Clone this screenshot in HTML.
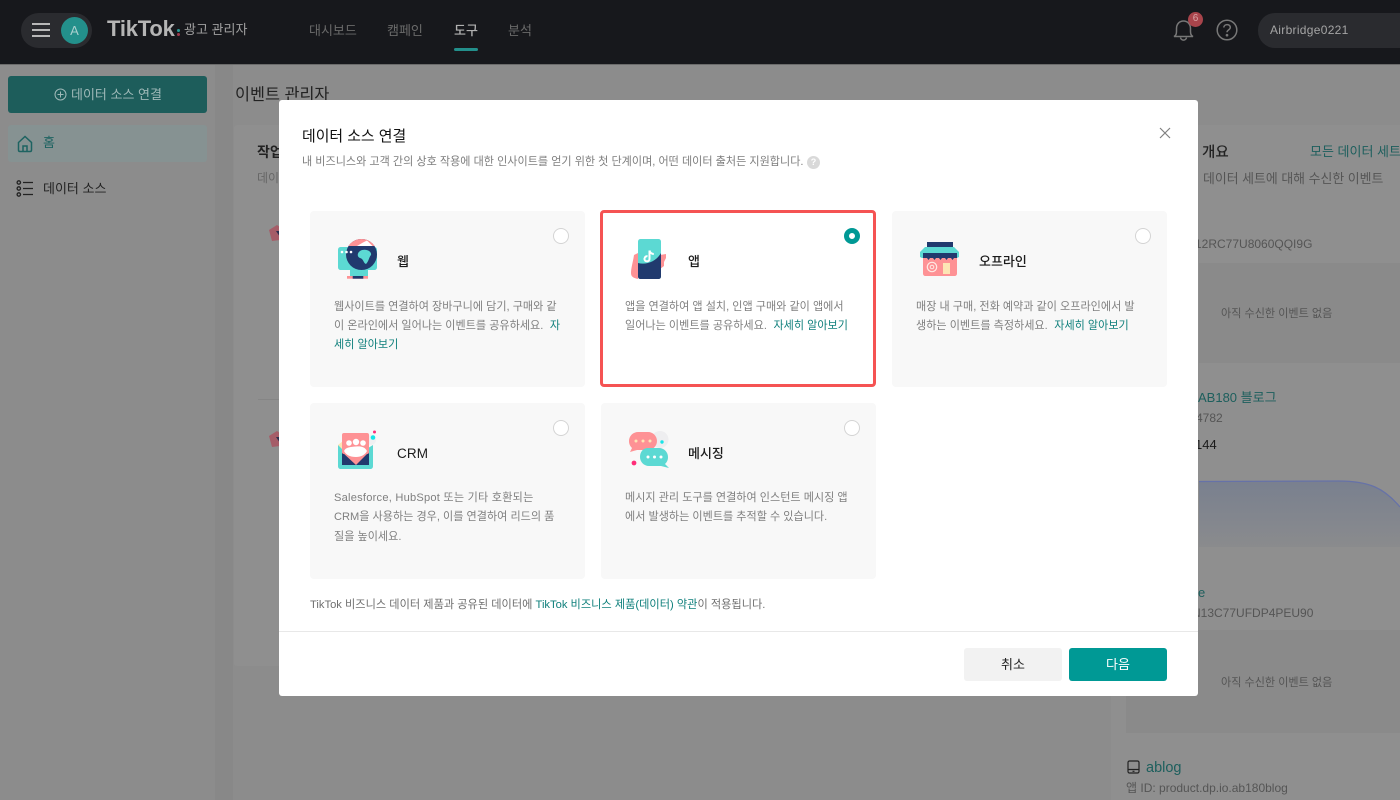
<!DOCTYPE html>
<html lang="ko"><head><meta charset="utf-8"><title>데이터 소스 연결</title>
<style>
html,body{margin:0;padding:0}
body{width:1400px;height:800px;overflow:hidden;position:relative;background:#8c8c8c;font-family:"Liberation Sans","Noto Sans CJK KR",sans-serif;color:#1a1a1a}
.a{position:absolute}
.t{position:absolute;white-space:nowrap;line-height:20px}
.card{position:absolute;width:275px;height:175.500px;background:#f8f8f8;border-radius:4px;box-sizing:border-box}
.radio{position:absolute;width:16px;height:16px;border-radius:50%;background:#fff;border:1px solid #d4d4d4;box-sizing:border-box}
.d{color:#7f7f7f;font-size:11.100px}
.lnk{color:#0e7f7b}
.m{margin-left:6.500px}
.ct{font-size:13px;font-weight:500;color:#1c1c1c}
svg{position:absolute;overflow:visible}
</style></head><body>
<!-- header -->
<div class="a" style="left:0;top:0;width:1400px;height:64px;background:#17181c;border-bottom:1px solid #6b6b6b"></div>
<div class="a" style="left:21px;top:13px;width:71px;height:35px;border-radius:18px;background:#2a2b2f"></div>
<svg style="left:32px;top:23px" width="18" height="14"><path d="M0 1H18M0 7H18M0 13H18" stroke="#b8b8b8" stroke-width="2"/></svg>
<div class="a" style="left:61px;top:17px;width:27px;height:27px;border-radius:50%;background:#23908b"></div>
<div class="t" style="left:61px;top:21px;width:27px;text-align:center;font-size:13px;color:#a9d0ce">A</div>
<div class="t" style="left:107px;top:19px;font-size:22px;font-weight:700;color:#b5b5b5;letter-spacing:-.2px">TikTok</div>
<div class="a" style="left:177px;top:29px;width:3px;height:3px;background:#2a9a96;border-radius:50%"></div>
<div class="a" style="left:177px;top:33px;width:3px;height:3px;background:#a03a4c;border-radius:50%"></div>
<div class="t" style="left:184px;top:20px;font-size:13px;color:#a0a0a0">광고 관리자</div>
<div class="t" style="left:309px;top:21px;font-size:13px;color:#6a6a6a">대시보드</div>
<div class="t" style="left:387px;top:21px;font-size:13px;color:#6a6a6a">캠페인</div>
<div class="t" style="left:454px;top:21px;font-size:13px;font-weight:500;color:#b0b0b0">도구</div>
<div class="a" style="left:454px;top:48px;width:24px;height:3px;border-radius:2px;background:#238f8b"></div>
<div class="t" style="left:508px;top:21px;font-size:13px;color:#6a6a6a">분석</div>
<svg style="left:1172px;top:18px" width="24" height="26" fill="none" stroke="#777" stroke-width="1.500"><path d="M2 18.500C5 17 4.500 14 4.500 10.500C4.500 6 7.500 3 11.500 3C15.500 3 18.500 6 18.500 10.500C18.500 14 18 17 21 18.500Z"/><path d="M8.500 19.500C9 23 14 23 14.500 19.500"/></svg>
<div class="a" style="left:1188px;top:12px;width:15px;height:15px;border-radius:50%;background:#a8444b"></div>
<div class="t" style="left:1188px;top:9px;width:15px;text-align:center;font-size:10px;color:#d8a5a8">6</div>
<svg style="left:1216px;top:19px" width="22" height="22" fill="none" stroke="#777" stroke-width="1.500"><circle cx="11" cy="11" r="9.800"/><path d="M7.800 8.500C8 4.500 14.500 4.800 14.300 8.500C14.200 11 11 10.800 11 13.300"/><circle cx="11" cy="16.200" r=".6" fill="#777"/></svg>
<div class="a" style="left:1258px;top:13px;width:160px;height:35px;border-radius:17px;background:#2a2b2f"></div>
<div class="t" style="left:1270px;top:20px;font-size:12px;color:#a5a5a5;letter-spacing:.3px">Airbridge0221</div>
<!-- sidebar -->
<div class="a" style="left:215px;top:65px;width:18px;height:735px;background:#888"></div>
<div class="a" style="left:8px;top:76px;width:199px;height:37px;border-radius:3px;background:#1d5d5b"></div>
<svg style="left:54px;top:88px" width="13" height="13" fill="none" stroke="#9fb9b8" stroke-width="1"><circle cx="6.500" cy="6.500" r="5.500"/><path d="M3.500 6.500H9.500M6.500 3.500V9.500"/></svg>
<div class="t" style="left:71px;top:85px;font-size:13px;color:#9fb9b8">데이터 소스 연결</div>
<div class="a" style="left:8px;top:125px;width:199px;height:37px;border-radius:3px;background:#869292"></div>
<svg style="left:17px;top:135px" width="17" height="18" fill="none" stroke="#1d6361" stroke-width="1.500"><path d="M1.500 7.500L8 1.500L14.500 7.500V15C14.500 16 14 16.500 13 16.500H3C2 16.500 1.500 16 1.500 15Z"/><path d="M6 16.500V11H10V16.500"/></svg>
<div class="t" style="left:43px;top:133px;font-size:13px;color:#1d6361">홈</div>
<svg style="left:16px;top:180px" width="18" height="17" fill="none" stroke="#222" stroke-width="1.300"><circle cx="2.800" cy="2.500" r="1.700"/><circle cx="2.800" cy="8.500" r="1.700"/><circle cx="2.800" cy="14.500" r="1.700"/><path d="M7 2.500H17M7 8.500H17M7 14.500H17"/></svg>
<div class="t" style="left:43px;top:179px;font-size:13px;color:#222">데이터 소스</div>
<!-- page behind -->
<div class="t" style="left:235px;top:85px;font-size:16.300px;color:#222">이벤트 관리자</div>
<div class="a" style="left:234px;top:125px;width:860px;height:541px;background:#8f8f8f;border-radius:3px"></div>
<div class="t" style="left:257px;top:142px;font-size:14px;font-weight:700;color:#222">작업</div>
<div class="t" style="left:257px;top:168px;font-size:12px;color:#666">데이</div>
<svg style="left:268px;top:224px" width="12" height="18"><path d="M1 6L9 1L12 3V16L4 17Z" fill="#a55d68"/><path d="M8 7L12 7V13Z" fill="#2b2f4f"/></svg>
<svg style="left:268px;top:430px" width="12" height="18"><path d="M1 6L9 1L12 3V16L4 17Z" fill="#a55d68"/><path d="M8 7L12 7V13Z" fill="#2b2f4f"/></svg>
<div class="a" style="left:258px;top:399px;width:22px;height:1px;background:#858585"></div>
<div class="a" style="left:1111px;top:125px;width:289px;height:675px;background:#8f8f8f"></div>
<div class="t" style="left:1202px;top:143px;font-size:14.500px;font-weight:500;color:#222">개요</div>
<div class="t" style="left:1310px;top:142px;font-size:13px;color:#1d5f5d">모든 데이터 세트</div>
<div class="t" style="left:1203px;top:169px;font-size:12.900px;color:#555">데이터 세트에 대해 수신한 이벤트</div>
<div class="t" style="left:1195px;top:234px;font-size:12px;color:#555">12RC77U8060QQI9G</div>
<div class="a" style="left:1199px;top:263px;width:201px;height:100px;background:#8a8a8a"></div>
<div class="t" style="left:1221px;top:304px;font-size:11.100px;color:#555">아직 수신한 이벤트 없음</div>
<div class="t" style="left:1198px;top:388px;font-size:13px;color:#1d5f5d">AB180 블로그</div>
<div class="t" style="left:1196px;top:408px;font-size:12px;color:#555">4782</div>
<div class="t" style="left:1195px;top:435px;font-size:13px;font-weight:500;color:#1a1a1a">144</div>
<svg style="left:1199px;top:480px" width="201" height="67"><defs><linearGradient id="g" x1="0" y1="0" x2="0" y2="1"><stop offset="0" stop-color="#79808f"/><stop offset="1" stop-color="#8a8b8d"/></linearGradient></defs><path d="M0 1.500L140 1C170 1 185 8 201 27V67H0Z" fill="url(#g)"/><path d="M0 1.500L140 1C170 1 185 8 201 27" fill="none" stroke="#6672a8" stroke-width="1.300"/></svg>
<div class="t" style="left:1198px;top:583px;font-size:13px;font-weight:500;color:#1d5f5d">e</div>
<div class="t" style="left:1192px;top:603px;font-size:12px;color:#555">N13C77UFDP4PEU90</div>
<div class="a" style="left:1126px;top:630px;width:274px;height:103px;background:#8a8a8a"></div>
<div class="t" style="left:1221px;top:673px;font-size:11.100px;color:#555">아직 수신한 이벤트 없음</div>
<svg style="left:1127px;top:760px" width="13" height="14" fill="none" stroke="#222" stroke-width="1.200"><rect x="1" y="1" width="11" height="12" rx="1.500"/><path d="M1 9.500H12M5.500 11.300H7.500"/></svg>
<div class="t" style="left:1146px;top:758px;font-size:14.500px;font-weight:500;color:#1d5f5d">ablog</div>
<div class="t" style="left:1126px;top:778px;font-size:12px;color:#555">앱 ID: product.dp.io.ab180blog</div>
<!-- modal -->
<div class="a" style="left:279px;top:100px;width:919px;height:596px;background:#fff;border-radius:3px"></div>
<div class="t" style="left:302px;top:127px;font-size:14.900px;font-weight:400;color:#111">데이터 소스 연결</div>
<div class="t" style="left:302px;top:152px;font-size:11.100px;color:#7d7d7d">내 비즈니스와 고객 간의 상호 작용에 대한 인사이트를 얻기 위한 첫 단계이며, 어떤 데이터 출처든 지원합니다.</div>
<div class="a" style="left:807px;top:156px;width:13px;height:13px;border-radius:50%;background:#d9d9d9"></div>
<div class="t" style="left:807px;top:152px;width:13px;text-align:center;font-size:9px;font-weight:700;color:#fff">?</div>
<svg style="left:1159px;top:127px" width="12" height="12"><path d="M1 1L11 11M11 1L1 11" stroke="#808080" stroke-width="1.200"/></svg>
<!-- cards -->
<div class="card" style="left:310px;top:211px"></div>
<div class="card" style="left:600px;top:210px;width:276px;height:177px;background:#fff;border:3px solid #f55353"></div>
<div class="card" style="left:892px;top:211px"></div>
<div class="card" style="left:310px;top:403px"></div>
<div class="card" style="left:601px;top:403px"></div>
<div class="radio" style="left:553px;top:228px"></div>
<div class="a" style="left:844px;top:228px;width:16px;height:16px;border-radius:50%;background:#fff;border:5px solid #009995;box-sizing:border-box"></div>
<div class="radio" style="left:1135px;top:228px"></div>
<div class="radio" style="left:553px;top:420px"></div>
<div class="radio" style="left:844px;top:420px"></div>
<!-- web icon -->
<svg style="left:337px;top:238px" width="41" height="43"><path d="M13 32H31V39H13Z" fill="#5cd9d3"/><path d="M1 12C1 10 2 9 4 9H37C39 9 40 10 40 12V29C40 31 39 32 37 32H4C2 32 1 31 1 29Z" fill="#5cd9d3"/><circle cx="24.500" cy="16.500" r="15.500" fill="#213a6e"/><path d="M11.500 8A15.500 15.500 0 0 1 37.500 8Z" fill="#fe9295"/><path d="M20 8L26 4.500L30 2.500L35.500 8Z" fill="#fff"/><path d="M23 13C28 10 35 13 34 17C32 19 32 23 29 26C26 25 27 21 23 20C20 19 20 15 23 13Z" fill="#5cd9d3"/><circle cx="5" cy="14" r="1.300" fill="#fff"/><circle cx="9.500" cy="14" r="1.300" fill="#fff"/><circle cx="14" cy="14" r="1.300" fill="#fff"/><rect x="10" y="38" width="21" height="2.700" fill="#fe9295"/><rect x="15.700" y="38" width="10.600" height="2.700" fill="#213a6e"/></svg>
<div class="t ct" style="left:397px;top:252px">웹</div>
<div class="t d" style="left:334px;top:296.500px">웹사이트를 연결하여 장바구니에 담기, 구매와 같</div>
<div class="t d" style="left:334px;top:315.500px">이 온라인에서 일어나는 이벤트를 공유하세요.<span class="lnk m">자</span></div>
<div class="t d lnk" style="left:334px;top:335px">세히 알아보기</div>
<!-- app icon -->
<svg style="left:631px;top:238px" width="36" height="42"><path d="M7 15L3 17C2 24 0 30 0 35C0 39 3 40 7 41Z" fill="#fe9295"/><path d="M29 17L35 16V20L33 24V28L29 31Z" fill="#fe9295"/><rect x="7" y="1" width="23" height="40" rx="2.500" fill="#5cd9d3"/><path d="M7 25C15 27 25 24 30 15V38.500C30 40 29 41 27.500 41H9.500C8 41 7 40 7 38.500Z" fill="#213a6e"/><path d="M18.500 12.500V21C18.500 24.300 13 24 13.500 20.500C13.800 18.500 15.500 18 16.500 18.500M18.500 12.500C19 14.800 20.800 16 22.800 16" fill="none" stroke="#fff" stroke-width="2"/></svg>
<div class="t ct" style="left:688px;top:252px">앱</div>
<div class="t d" style="left:625px;top:296.500px">앱을 연결하여 앱 설치, 인앱 구매와 같이 앱에서</div>
<div class="t d" style="left:625px;top:315.500px">일어나는 이벤트를 공유하세요.<span class="lnk m">자세히 알아보기</span></div>
<!-- store icon -->
<svg style="left:920px;top:241px" width="39" height="36"><rect x="7" y="1" width="26" height="5" fill="#213a6e"/><path d="M5 6H34L39 11V16L37 17H2L0 16V11Z" fill="#5cd9d3"/><rect x="3" y="12" width="34" height="5.500" fill="#213a6e"/><path d="M3 17H37V32.500C37 34 36 35 34.500 35H5.500C4 35 3 34 3 32.500Z" fill="#fe9295"/><path d="M7 17L8.500 19L10 17ZM13 17L14.500 19L16 17ZM19 17L20.500 19L22 17ZM25 17L26.500 19L28 17ZM31 17L32.500 19L34 17Z" fill="#213a6e"/><rect x="23" y="22" width="7" height="11" fill="#fde5b5"/><circle cx="12" cy="26" r="4.700" fill="none" stroke="#ffe9e4" stroke-width="1.200"/><circle cx="12" cy="26" r="1.800" fill="none" stroke="#ffe9e4" stroke-width="1"/></svg>
<div class="t ct" style="left:979px;top:252px">오프라인</div>
<div class="t d" style="left:916px;top:296.500px">매장 내 구매, 전화 예약과 같이 오프라인에서 발</div>
<div class="t d" style="left:916px;top:315.500px">생하는 이벤트를 측정하세요.<span class="lnk m">자세히 알아보기</span></div>
<!-- crm icon -->
<svg style="left:337px;top:430px" width="41" height="40"><circle cx="34" cy="10" r="5" fill="#f0f0f2"/><path d="M1 15L18 26L36 15V36C36 38 35 39 33 39H4C2 39 1 38 1 36Z" fill="#5cd9d3"/><path d="M5 18L18 28L32 18V35H5Z" fill="#213a6e"/><path d="M1 15L6 11V20Z" fill="#fde5b5"/><rect x="5" y="3" width="27" height="21" rx="2" fill="#fe9295"/><path d="M5 19V22L19 35L32 22V19Z" fill="#fe9295"/><circle cx="12" cy="13" r="2.800" fill="#fff"/><circle cx="19" cy="12" r="3.200" fill="#fff"/><circle cx="26" cy="13" r="2.800" fill="#fff"/><path d="M7 21C9 17 13 17 19 16.500C24 16 28 17 30 21C28 25 24 27 19 27C13 27 9 25 7 21Z" fill="#fff"/><circle cx="36" cy="7.500" r="2.300" fill="#18e4e8"/><circle cx="37.500" cy="2" r="1.500" fill="#ff2d78"/></svg>
<div class="t ct" style="left:397px;top:443.500px;font-size:13.500px;letter-spacing:.1px">CRM</div>
<div class="t d" style="left:334px;top:487.500px;letter-spacing:.23px">Salesforce, HubSpot 또는 기타 호환되는</div>
<div class="t d" style="left:334px;top:506.500px">CRM을 사용하는 경우, 이를 연결하여 리드의 품</div>
<div class="t d" style="left:334px;top:526.500px">질을 높이세요.</div>
<!-- message icon -->
<svg style="left:628px;top:430px" width="42" height="40"><circle cx="32" cy="9.500" r="8.500" fill="#eeeef0"/><circle cx="34" cy="12" r="1.700" fill="#18e4e8"/><path d="M10 2H20C25 2 29 6 29 11C29 16 25 20 20 20H9L2 22L4 18C2 16 1 14 1 11C1 6 5 2 10 2Z" fill="#fe9295"/><path d="M20 18H29L25 20H15Z" fill="#213a6e"/><path d="M20 18H31C36 18 40 22 40 27C40 30 39 32 37 34L41 38L33 36H21C16 36 12 32 12 27C12 22 15 18 20 18Z" fill="#5cd9d3"/><circle cx="8" cy="11" r="1.500" fill="#fde5b5"/><circle cx="15" cy="11" r="1.500" fill="#fde5b5"/><circle cx="22" cy="11" r="1.500" fill="#fde5b5"/><circle cx="20" cy="27" r="1.500" fill="#fff"/><circle cx="26.500" cy="27" r="1.500" fill="#fff"/><circle cx="33" cy="27" r="1.500" fill="#fff"/><circle cx="6" cy="33" r="2.400" fill="#ff2d78"/></svg>
<div class="t ct" style="left:688px;top:443.500px">메시징</div>
<div class="t d" style="left:625px;top:487.500px">메시지 관리 도구를 연결하여 인스턴트 메시징 앱</div>
<div class="t d" style="left:625px;top:506.500px">에서 발생하는 이벤트를 추적할 수 있습니다.</div>
<!-- footer -->
<div class="t" style="left:310px;top:594.500px;font-size:11.200px;color:#6f6f6f">TikTok 비즈니스 데이터 제품과 공유된 데이터에 <span class="lnk">TikTok 비즈니스 제품(데이터) 약관</span>이 적용됩니다.</div>
<div class="a" style="left:279px;top:631px;width:919px;height:1px;background:#e8e8e8"></div>
<div class="a" style="left:964px;top:648px;width:98px;height:33px;border-radius:3px;background:#f2f2f2"></div>
<div class="t" style="left:964px;top:655px;width:98px;text-align:center;font-size:13px;color:#222">취소</div>
<div class="a" style="left:1069px;top:648px;width:98px;height:33px;border-radius:3px;background:#009995"></div>
<div class="t" style="left:1069px;top:655px;width:98px;text-align:center;font-size:13px;color:#fff">다음</div>
</body></html>
